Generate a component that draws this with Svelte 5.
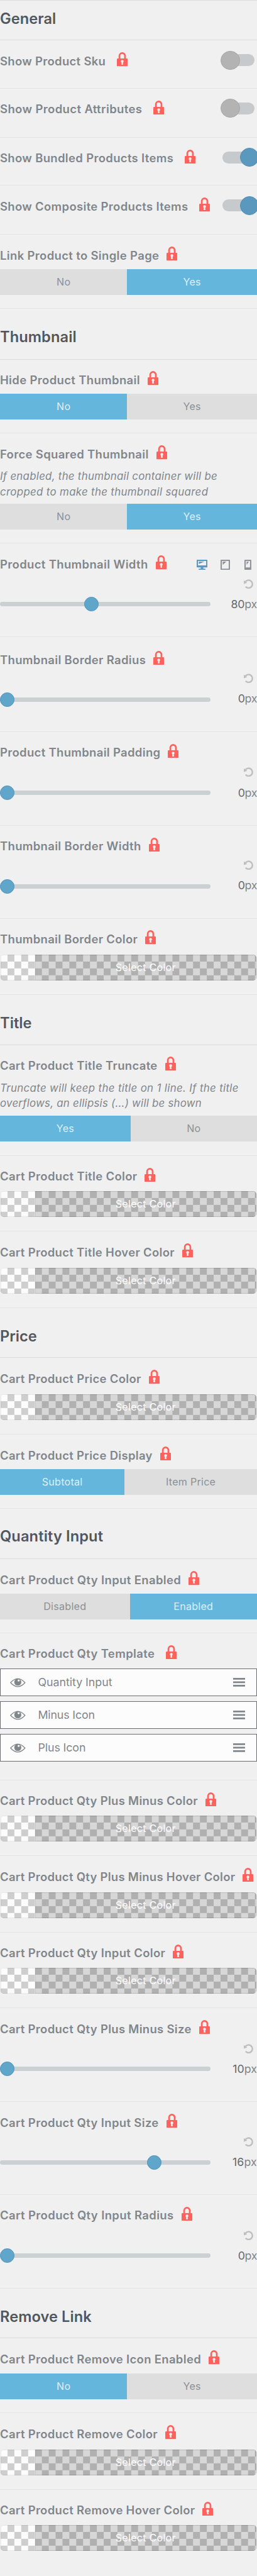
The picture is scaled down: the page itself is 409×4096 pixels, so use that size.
<script>
  const toggle = (label, w, on, h) => ({ kind: 'toggle', label, w, on, h });
  const heading = (label, w, h, first = false) => ({ kind: 'heading', label, w, h, first });
  const buttons = (label, w, options, active, split, h, extra = {}) => ({ kind: 'buttons', label, w, options, active, split, h, ...extra });
  const slider = (label, w, value, valueW, knob, h, extra = {}) => ({ kind: 'slider', label, w, value, valueW, knob, h, ...extra });
  const color = (label, w, h, gap = 18) => ({ kind: 'color', label, w, h, gap });

  const rows = [
    heading('General', 130.500, 92, true),
    toggle('Show Product Sku', 246, false, 112),
    toggle('Show Product Attributes', 331, false, 114),
    toggle('Show Bundled Products Items', 404, true, 112),
    toggle('Show Composite Products Items', 438, true, 114),
    buttons('Link Product to Single Page', 370.500, ['No', 'Yes'], 1, 296, 172),
    heading('Thumbnail', 178, 118),
    buttons('Hide Product Thumbnail', 326, ['No', 'Yes'], 0, 296, 172),
    buttons('Force Squared Thumbnail', 346, ['No', 'Yes'], 1, 296, 256, {
      text: [
        ['If enabled, the thumbnail container will be', 506],
        ['cropped to make the thumbnail squared', 484.500]
      ]
    }),
    slider('Product Thumbnail Width', 344.500, 80, 60.500, 213, 218, { devices: true }),
    slider('Thumbnail Border Radius', 339.500, 0, 44, 17, 220, { top: 4, shift: -2 }),
    slider('Product Thumbnail Padding', 373.500, 0, 44, 17, 218),
    slider('Thumbnail Border Width', 328.500, 0, 44, 17, 216, { shift: -2 }),
    color('Thumbnail Border Color', 320.500, 178),
    heading('Title', 74, 116),
    buttons('Cart Product Title Truncate', 366.500, ['Yes', 'No'], 0, 304, 258, {
      text: [
        ['Truncate will keep the title on 1 line. If the title', 555.500],
        ['overflows, an ellipsis (...) will be shown', 469.500]
      ],
      tall: true
    }),
    color('Cart Product Title Color', 319.500, 176, 16),
    color('Cart Product Title Hover Color', 406.500, 178),
    heading('Price', 86, 116),
    color('Cart Product Price Color', 328.500, 178),
    buttons('Cart Product Price Display', 355, ['Subtotal', 'Item Price'], 0, 290, 172),
    heading('Quantity Input', 240, 118),
    buttons('Cart Product Qty Input Enabled', 421.500, ['Disabled', 'Enabled'], 1, 302, 172),
    {
      kind: 'sortable',
      label: 'Cart Product Qty Template',
      w: 360,
      items: [
        ['Quantity Input', 172.500],
        ['Minus Icon', 132],
        ['Plus Icon', 111]
      ],
      h: 342
    },
    color('Cart Product Qty Plus Minus Color', 460.500, 176, 16),
    color('Cart Product Qty Plus Minus Hover Color', 547.500, 178),
    color('Cart Product Qty Input Color', 385, 176, 16),
    slider('Cart Product Qty Plus Minus Size', 445.500, 10, 56.500, 17, 218),
    slider('Cart Product Qty Input Size', 369.500, 16, 57, 359, 216, { shift: -2 }),
    slider('Cart Product Qty Input Radius', 404.500, 0, 44, 17, 218),
    heading('Remove Link', 213, 116),
    buttons('Cart Product Remove Icon Enabled', 468, ['No', 'Yes'], 0, 296, 174, { gap: 16 }),
    color('Cart Product Remove Color', 367, 178),
    { ...color('Cart Product Remove Hover Color', 454, 200, 16), last: true }
  ];

  // Tracks the text so that it fills the given width, whatever face is in use.
  function fit(node, width) {
    const ratio = document.querySelector('main').getBoundingClientRect().width / 598;
    const natural = node.getBoundingClientRect().width / ratio;
    node.style.letterSpacing = (width - natural) / node.textContent.length + 'px';
  }
</script>

<main>
  <div class="edge"></div>
  {#each rows as row}
    {#if row.kind === 'heading'}
      <h3 class:first={row.first} style:height="{row.h}px"><span use:fit={row.w}>{row.label}</span></h3>
    {:else}
      <section class="row" class:last={row.last} style:height="{row.h}px" style:padding-top="{30 + (row.top ?? 0)}px">
        <div class="label" class:wide={row.kind === 'toggle' || row.kind === 'sortable'}>
          <span use:fit={row.w}>{row.label}</span>
          <svg class="lock" viewBox="0 0 25 33">
            <path d="M6 16V8.500a6.500 6.500 0 0 1 13 0V16" fill="none" stroke="#ff625c" stroke-width="4" />
            <rect x="0" y="14.500" width="25" height="18.200" rx="1.800" fill="#ff625c" />
            <circle cx="12.500" cy="21.200" r="3.200" fill="#f0f0f0" />
            <path d="M11.400 22h2.200l1.200 7h-4.600z" fill="#f0f0f0" />
          </svg>
          {#if row.kind === 'toggle'}
            <span class="switch" class:on={row.on}><i></i></span>
          {/if}
          {#if row.devices}
            <span class="devices">
              <svg class="desktop" viewBox="0 0 25 24" fill="#5b98c0">
                <path fill-rule="evenodd" d="M1.500 0h22a1.500 1.500 0 0 1 1.500 1.500v15a1.500 1.500 0 0 1-1.500 1.500H15.500v3h3.500a1.500 1.500 0 0 1 1.500 1.500V24h-16v-1.500a1.500 1.500 0 0 1 1.500-1.500h3.500v-3H1.500A1.500 1.500 0 0 1 0 16.500v-15A1.500 1.500 0 0 1 1.500 0zM3 3v10h19V3z" />
                <path d="M5 4.500h13L5 10z" />
              </svg>
              <svg class="tablet" viewBox="0 0 22 24" fill="#8f9397">
                <path fill-rule="evenodd" d="M1.500 0h19A1.500 1.500 0 0 1 22 1.500v21a1.500 1.500 0 0 1-1.500 1.500h-19A1.500 1.500 0 0 1 0 22.500v-21A1.500 1.500 0 0 1 1.500 0zM3 3v18h16V3z" />
                <path d="M5 4.500h8.500L5 12z" />
              </svg>
              <svg class="phone" viewBox="0 0 16 24" fill="#8f9397">
                <path fill-rule="evenodd" d="M1.500 0h13A1.500 1.500 0 0 1 16 1.500v21a1.500 1.500 0 0 1-1.500 1.500h-13A1.500 1.500 0 0 1 0 22.500v-21A1.500 1.500 0 0 1 1.500 0zM3 3v15h10V3z" />
                <path d="M5 4.500h5.500L5 12z" />
              </svg>
            </span>
          {/if}
        </div>

        {#if row.text}
          <p class="desc">
            {#each row.text as [line, w]}
              <span><em use:fit={w}>{line}</em></span>
            {/each}
          </p>
        {/if}

        {#if row.kind === 'buttons'}
          <div class="buttons" class:tall={row.tall} style:margin-top="{row.text ? 10 : (row.gap ?? 14)}px" style:grid-template-columns="{row.split}px 1fr">
            {#each row.options as option, i}
              <span class="option" class:active={i === row.active}>{option}</span>
            {/each}
          </div>
        {:else if row.kind === 'color'}
          <div class="color" style:margin-top="{row.gap}px">
            <span class="pick">Select Color</span>
          </div>
        {:else if row.kind === 'slider'}
          <div class="slider">
            <div class="track"><i style:margin-left="{row.knob - 17}px"></i></div>
            <div class="side" style:padding-top="{17 + (row.shift ?? 0)}px">
              <svg class="reset" viewBox="0 0 22 22">
                <path d="M3.600 6.300A9 9 0 1 1 4.200 17.100" fill="none" stroke="#bfbfbf" stroke-width="3.600" />
                <path d="M0 2.500l7.800 5.900L0 10.800z" fill="#bfbfbf" />
              </svg>
              <span class="value" use:fit={row.valueW}><b>{row.value}</b>px</span>
            </div>
          </div>
        {:else if row.kind === 'sortable'}
          <ul>
            {#each row.items as [item, w]}
              <li>
                <svg class="eye" viewBox="0 0 36 22">
                  <path d="M1.200 11Q18-7.500 34.800 11Q18 29.500 1.200 11z" fill="none" stroke="#80868b" stroke-width="1.900" />
                  <circle cx="18" cy="9.800" r="8.200" fill="#80868b" />
                  <circle cx="20" cy="6" r="2.500" fill="#fcfcfc" />
                </svg>
                <span use:fit={w}>{item}</span>
                <svg class="bars" viewBox="0 0 28 20"><path d="M0 2h28M0 10h28M0 18h28" stroke="#80868b" stroke-width="4" /></svg>
              </li>
            {/each}
          </ul>
        {/if}
      </section>
    {/if}
  {/each}
</main>

<style>
  :global(body) {
    background: #f0f0f0;
    overflow: hidden;
  }
  main {
    zoom: 0.6838;
    width: 598px;
    height: 5990px;
    overflow: hidden;
    background: #f0f0f0;
    font-family: Inter, 'Liberation Sans', sans-serif;
    color: #80868b;
  }
  .edge {
    height: 2px;
    background: #dcdcdc;
  }
  h3 {
    box-sizing: border-box;
    margin: 0;
    padding-top: 43.5px;
    border-bottom: 2px solid #dadcdc;
    font-size: 34.5px;
    line-height: 45px;
    font-weight: 600;
    color: #50575e;
    white-space: nowrap;
  }
  h3.first {
    padding-top: 19.5px;
  }
  .row {
    box-sizing: border-box;
    border-bottom: 2px solid #e2e3e3;
  }
  .row.last {
    border-bottom: 0;
  }
  .label {
    display: flex;
    align-items: flex-start;
    height: 36px;
    line-height: 36px;
    font-size: 27px;
    font-weight: 600;
    white-space: nowrap;
  }
  .lock {
    width: 25px;
    height: 33px;
    margin: -2.5px 0 0 17.5px;
    flex: none;
  }
  .wide .lock {
    margin-left: 25.5px;
  }
  .switch {
    width: 74px;
    height: 28px;
    margin: 2px 6px 0 auto;
    border-radius: 14px;
    background: #c6cacd;
    display: flex;
    align-items: center;
    flex: none;
  }
  .switch i {
    box-sizing: border-box;
    width: 44px;
    height: 44px;
    border-radius: 50%;
    background: #b3b3b3;
    border: 2px solid #a8a8a8;
    margin-left: -4px;
    flex: none;
  }
  .switch.on i {
    background: #5b98be;
    border-color: #518fb8;
    margin-left: 40px;
  }
  .devices {
    display: flex;
    margin: 7px 13px 0 auto;
  }
  .devices svg {
    height: 24px;
  }
  .desktop {
    width: 25px;
    margin-right: 30px;
  }
  .tablet {
    width: 22px;
    margin-right: 34px;
  }
  .phone {
    width: 16px;
  }
  .desc {
    margin: 16px 0 0;
    font-size: 24.6px;
    line-height: 36px;
    white-space: nowrap;
  }
  .desc span {
    display: block;
  }
  .buttons {
    display: grid;
    height: 60px;
    line-height: 59px;
  }
  .buttons.tall {
    height: 61px;
  }
  .option {
    background: #dedede;
    color: #8a9097;
    text-align: center;
    font-size: 23.5px;
    letter-spacing: 0.4px;
  }
  .option.active {
    background: #65b6dc;
    color: #deeff8;
  }
  .color {
    box-sizing: border-box;
    margin: 0 2px;
    height: 60px;
    padding-left: 80px;
    border-radius: 7px;
    overflow: hidden;
    background: repeating-conic-gradient(#cecece 0 25%, #fcfcfc 0 50%) 0 0 / 32px 32px;
    box-shadow: inset 0 0 0 1px rgba(0, 0, 0, 0.1);
  }
  .pick {
    display: block;
    height: 60px;
    line-height: 59px;
    background: rgba(0, 0, 0, 0.145);
    box-shadow: inset 0 0 0 1px rgba(0, 0, 0, 0.1);
    border-radius: 0 7px 7px 0;
    text-align: center;
    color: #fcfcfc;
    font-size: 23.5px;
    letter-spacing: 0.4px;
  }
  .slider {
    display: flex;
    justify-content: space-between;
  }
  .track {
    width: 490px;
    height: 10px;
    margin-top: 70px;
    border-radius: 5px;
    background: #cbd0d2;
    display: flex;
    align-items: center;
  }
  .track i {
    box-sizing: border-box;
    width: 34px;
    height: 34px;
    border-radius: 50%;
    background: #60a5ca;
    border: 2px solid #5193bc;
    flex: none;
  }
  .side {
    display: flex;
    flex-direction: column;
    align-items: flex-end;
  }
  .reset {
    width: 22px;
    height: 22px;
    margin-right: 9px;
  }
  .value {
    margin-top: 19px;
    font-size: 26px;
    line-height: 36px;
    white-space: nowrap;
  }
  .value b {
    font-weight: 400;
    color: #64696d;
  }
  ul {
    list-style: none;
    margin: 16px 0 0;
    padding: 0;
    display: grid;
    gap: 12px;
  }
  li {
    box-sizing: border-box;
    height: 64px;
    border: 2px solid #6a6c6f;
    background: #fcfcfc;
    display: flex;
    align-items: center;
    font-size: 26px;
    line-height: 60px;
    white-space: nowrap;
  }
  .eye {
    width: 36px;
    height: 22px;
    margin: 2px 29px 0 22px;
    flex: none;
  }
  .bars {
    width: 28px;
    height: 20px;
    margin-left: auto;
    margin-right: 26px;
    flex: none;
  }
</style>
